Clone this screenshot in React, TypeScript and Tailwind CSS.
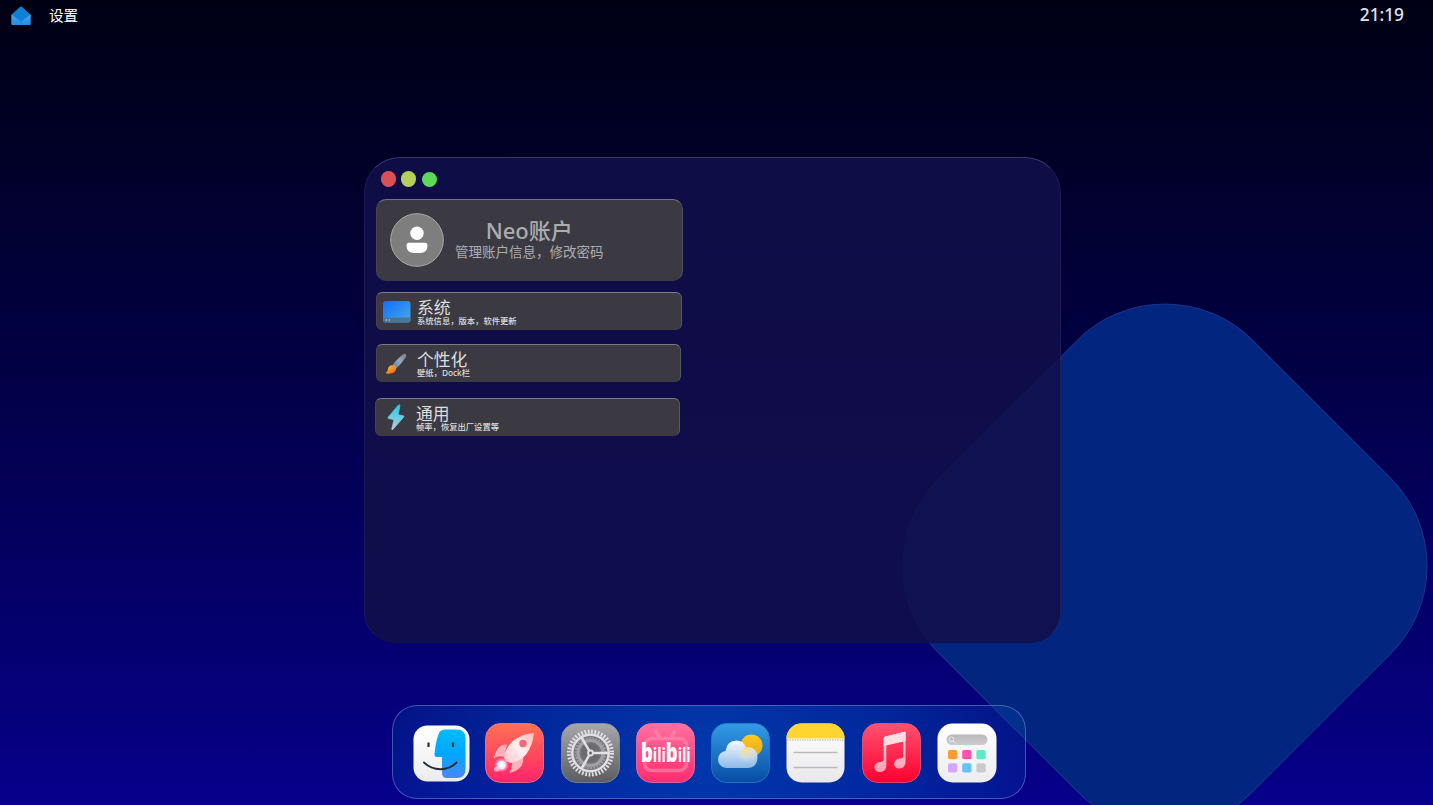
import type { ReactNode } from 'react';

interface SettingItem {
  title: string;
  description: string;
  icon: ReactNode;
  className: string;
}

function MailIcon() {
  return (
    <svg width="22" height="22" viewBox="0 0 22 22">
      <defs>
        <linearGradient id="mailFront" x1="0" y1="0" x2="0" y2="1">
          <stop offset="0" stopColor="#4ba7e8" />
          <stop offset="1" stopColor="#1f8ee2" />
        </linearGradient>
      </defs>
      <path d="M1.300 9.500h19.400V19q0 1-1 1H2.300q-1 0-1-1z" fill="url(#mailFront)" />
      <path d="m2.500 8.800 7.700-7q.8-.7 1.600 0l7.700 7q.7.700 0 1.300L11 17 2.500 10.100q-.7-.6 0-1.300z" fill="#0d80d8" />
    </svg>
  );
}

function ScreenIcon() {
  return (
    <svg width="28" height="22" viewBox="0 0 28 22" className="translate-y-px">
      <defs>
        <linearGradient id="screen" x1="0" y1="0" x2="1" y2="1">
          <stop offset="0" stopColor="#0c70ff" />
          <stop offset="1" stopColor="#4ca9e6" />
        </linearGradient>
      </defs>
      <rect width="27.500" height="21.500" rx="2.500" fill="url(#screen)" />
      <path d="M0 16.500h27.500V19q0 2.500-2.500 2.500H2.500Q0 21.500 0 19z" fill="#4b7595" />
      <path d="M2.500 18.500h1.500v1H2.500zM5.500 18.500H7v1H5.500z" fill="#c5dbe8" />
    </svg>
  );
}

function BrushIcon() {
  return (
    <svg width="22" height="22" viewBox="0 0 22 22" className="-translate-x-px translate-y-px">
      <defs>
        <linearGradient id="handle" x1="1" y1="0" x2="0" y2="1">
          <stop offset="0" stopColor="#77818f" />
          <stop offset=".5" stopColor="#9aa7b6" />
          <stop offset="1" stopColor="#667c99" />
        </linearGradient>
        <linearGradient id="bristle" x1="0" y1="0" x2=".6" y2="1">
          <stop offset="0" stopColor="#ffc13d" />
          <stop offset="1" stopColor="#ef701a" />
        </linearGradient>
      </defs>
      <path d="M20.800 1.200c1 1 .2 2.600-.6 3.900-2.600 3.900-5.700 7.500-8.700 10.200l-4-3.300c2.600-3.500 6.200-7.200 9.800-9.900 1.200-.8 2.600-1.800 3.500-.9z" fill="url(#handle)" />
      <path d="M7.200 12.200c2.500-.2 4.200 1.400 4 3.600-.3 3.700-5.400 5.700-9.700 4.700-.8-.2-.8-.8-.2-1.300 1.500-1 1.300-2 1.700-3.700.5-2 2-3.200 4.200-3.300z" fill="url(#bristle)" />
    </svg>
  );
}

function BoltIcon() {
  return (
    <svg width="18" height="27" viewBox="0 0 18 27">
      <defs>
        <linearGradient id="bolt" x1="0" y1="0" x2="0" y2="1">
          <stop offset="0" stopColor="#20cbee" />
          <stop offset="1" stopColor="#b6cdd4" />
        </linearGradient>
      </defs>
      <path
        d="M11.300 1.200 1.200 13.300q-.7 1 .5 1.300l5.300 1-2.200 9.200q-.1 1.700 1.200.5L16.700 13q.7-1.100-.6-1.300l-5-1 1.800-8.700q.1-2-1.600-.8z"
        fill="url(#bolt)"
        stroke="url(#bolt)"
        strokeWidth=".8"
      />
    </svg>
  );
}

function AccountIcon() {
  return (
    <svg width="54" height="54" viewBox="0 0 54 54">
      <circle cx="27" cy="27" r="26.300" fill="#7e7e7f" stroke="#aaaaac" strokeWidth="1" />
      <circle cx="27" cy="20.200" r="6.700" fill="#fff" />
      <path d="M19 29.700h16q2.500 0 2.500 2.600 0 7.700-7.500 7.700h-6q-7.500 0-7.500-7.700 0-2.600 2.500-2.600z" fill="#fff" />
    </svg>
  );
}

function FinderIcon() {
  return (
    <svg width="57" height="57" viewBox="0 0 57 57">
      <defs>
        <linearGradient id="finderBg" x1="0" y1="0" x2="0" y2="1">
          <stop offset="0" stopColor="#fff" />
          <stop offset="1" stopColor="#ececee" />
        </linearGradient>
        <linearGradient id="finderFace" x1="0" y1="0" x2="0" y2="1">
          <stop offset="0" stopColor="#05bcff" />
          <stop offset=".55" stopColor="#06a5fb" />
          <stop offset="1" stopColor="#4b86f8" />
        </linearGradient>
        <filter id="faceEdge">
          <feGaussianBlur stdDeviation=".4" />
        </filter>
      </defs>
      <rect x=".5" y=".5" width="56" height="56" rx="14" fill="url(#finderBg)" />
      <path
        d="M32 4.500h12q8.500 0 8.500 8.500v31q0 9-8.500 9H34q-5 0-5-5V32h-5q-3 0-2.500-3C22.500 20 23.500 14 26 8q1.500-3.500 6-3.500z"
        fill="url(#finderFace)"
        filter="url(#faceEdge)"
      />
      <path d="M15.500 17.500v4.500M40 17.500v4.500" stroke="#23343f" strokeWidth="2.200" />
      <path d="M11 37.500q7 6.700 16.500 6.700 9.500 0 16-6.700" fill="none" stroke="#252b35" strokeWidth="1.900" strokeLinecap="round" />
    </svg>
  );
}

function RocketIcon() {
  return (
    <svg width="59" height="60" viewBox="0 0 59 60">
      <defs>
        <linearGradient id="rocketBg" x1="0" y1="0" x2="0" y2="1">
          <stop offset="0" stopColor="#ff7056" />
          <stop offset=".5" stopColor="#ff4c5b" />
          <stop offset="1" stopColor="#ff246c" />
        </linearGradient>
        <linearGradient id="rocketBody" x1="1" y1="0" x2="0" y2="1">
          <stop offset="0" stopColor="#ffb9b5" />
          <stop offset=".5" stopColor="#fff0ef" />
          <stop offset="1" stopColor="#ffc1cb" />
        </linearGradient>
        <radialGradient id="flame">
          <stop offset="0" stopColor="#fff" />
          <stop offset=".5" stopColor="#ffc7e6" />
          <stop offset="1" stopColor="#ff91cc" stopOpacity="0" />
        </radialGradient>
      </defs>
      <rect x=".5" y=".5" width="58" height="59" rx="15" fill="url(#rocketBg)" stroke="#ff8988" strokeWidth=".7" />
      <path d="M22 21.500q-6-.5-9.500 4.500-2.500 4-4 9.500 5-3.200 10.500-1.700zM27 38q1 5-2.500 12 7-1.500 11-6 3.500-4 2.500-11z" fill="#ffb1b9" />
      <path d="M49 10q-15 1-24 11-5 6-6 13 .5 5.500 7.500 6Q35 38.500 41 31.500 48 22 49 10z" fill="url(#rocketBody)" />
      <circle cx="38" cy="20.500" r="3.700" fill="#f2687b" />
      <circle cx="16.500" cy="42" r="7.500" fill="url(#flame)" />
      <circle cx="16.500" cy="42" r="4.300" fill="#fff" opacity=".5" />
      <circle cx="11.500" cy="46" r="2.600" fill="#ffd9ec" opacity=".7" />
    </svg>
  );
}

function GearIcon() {
  return (
    <svg width="59" height="60" viewBox="0 0 59 60">
      <defs>
        <linearGradient id="gearBg" x1="0" y1="0" x2="0" y2="1">
          <stop offset="0" stopColor="#a8a8ac" />
          <stop offset="1" stopColor="#5d5d61" />
        </linearGradient>
      </defs>
      <rect x=".5" y=".5" width="58" height="59" rx="15" fill="url(#gearBg)" stroke="#8d95a6" strokeWidth=".7" />
      <circle cx="29.500" cy="30" r="19" fill="#77777b" />
      <circle cx="29.500" cy="30" r="21.500" fill="none" stroke="#e2e2e4" strokeWidth="4" strokeDasharray="1.700 1.678" />
      <circle cx="29.500" cy="30" r="18.200" fill="none" stroke="#e0e0e2" strokeWidth="2.500" />
      <circle cx="29.500" cy="30" r="12.500" fill="none" stroke="#a2a2a6" strokeWidth="3.200" />
      <circle cx="29.500" cy="30" r="15" fill="none" stroke="#a2a2a5" strokeWidth="2" strokeDasharray="1.500 1.640" />
      <circle cx="29.500" cy="30" r="9.500" fill="#6c6c70" />
      <path d="M29.500 30h18M29.500 30l-9-15.600M29.500 30l-9 15.600" stroke="#e3e3e5" strokeWidth="2.500" />
      <circle cx="29.500" cy="30" r="3.400" fill="#dedee0" />
      <circle cx="29.500" cy="30" r="1.500" fill="#65656a" />
    </svg>
  );
}

function BilibiliIcon() {
  return (
    <svg width="59" height="60" viewBox="0 0 59 60" className="overflow-visible">
      <defs>
        <linearGradient id="biliBg" x1="0" y1="0" x2="0" y2="1">
          <stop offset="0" stopColor="#ff70a0" />
          <stop offset="1" stopColor="#ff2c6e" />
        </linearGradient>
      </defs>
      <rect x=".5" y=".5" width="58" height="59" rx="15" fill="url(#biliBg)" stroke="#f47db0" strokeWidth=".7" />
      <g fill="none" stroke="#ff91b4" strokeWidth="3.700" strokeLinecap="round" opacity=".55">
        <rect x="8.500" y="15.500" width="42" height="32" rx="7" />
        <path d="m20 9 4 5.500M38.500 9l-4 5.500" />
      </g>
      <text
        x="7"
        y="39"
        fill="#fff"
        fontSize="20"
        fontWeight="700"
        transform="scale(.71 1)"
        className="font-['Open_Sans','Noto_Sans',sans-serif]"
      >
        <tspan fontSize="26" fontWeight="800">b</tspan>
        ili
        <tspan fontSize="26" fontWeight="800">b</tspan>
        ili
      </text>
    </svg>
  );
}

function WeatherIcon() {
  return (
    <svg width="59" height="60" viewBox="0 0 59 60">
      <defs>
        <linearGradient id="weatherBg" x1="0" y1="0" x2="0" y2="1">
          <stop offset="0" stopColor="#339ce6" />
          <stop offset="1" stopColor="#064ca4" />
        </linearGradient>
        <linearGradient id="sun" x1="0" y1="0" x2="0" y2="1">
          <stop offset="0" stopColor="#ffc721" />
          <stop offset="1" stopColor="#e3ab16" />
        </linearGradient>
        <linearGradient id="cloud" x1="0" y1="0" x2="0" y2="1">
          <stop offset="0" stopColor="#f5faff" />
          <stop offset="1" stopColor="#8cb9e8" />
        </linearGradient>
        <radialGradient id="sunGlow" cx=".4" cy=".15" r=".75">
          <stop offset="0" stopColor="#ffdb75" />
          <stop offset="1" stopColor="#dae9f4" stopOpacity="0" />
        </radialGradient>
      </defs>
      <rect x=".5" y=".5" width="58" height="59" rx="15" fill="url(#weatherBg)" stroke="#307bc4" strokeWidth=".8" />
      <circle cx="40.500" cy="22.500" r="11" fill="url(#sun)" />
      <path d="M16 45q-8.500-.5-9-8.500.5-7.500 7.500-8.500 1.500-10.500 11-10.500 7 0 9.500 7 11-1 11.500 9.500 0 10.500-9.500 11z" fill="url(#cloud)" />
      <circle cx="37" cy="33" r="9" fill="url(#sunGlow)" />
    </svg>
  );
}

function NotesIcon() {
  return (
    <svg width="59" height="60" viewBox="0 0 59 60">
      <defs>
        <linearGradient id="notesBg" x1="0" y1="0" x2="0" y2="1">
          <stop offset="0" stopColor="#fff" />
          <stop offset="1" stopColor="#e8e8ea" />
        </linearGradient>
        <clipPath id="notesClip">
          <rect x=".5" y=".5" width="58" height="59" rx="15" />
        </clipPath>
      </defs>
      <g clipPath="url(#notesClip)">
        <path d="M0 0h59v60H0z" fill="url(#notesBg)" />
        <path d="M0 0h59v15.500H0z" fill="#ffd52f" />
      </g>
      <path d="M1 17h57" stroke="#aaa" strokeWidth="1" strokeDasharray="1.500 1" />
      <path d="M8 29.500h43M8 44.500h43" stroke="#bbbbbd" strokeWidth="1.300" strokeLinecap="round" />
    </svg>
  );
}

function MusicIcon() {
  return (
    <svg width="59" height="60" viewBox="0 0 59 60">
      <defs>
        <linearGradient id="musicBg" x1="0" y1="0" x2="0" y2="1">
          <stop offset="0" stopColor="#ff5272" />
          <stop offset="1" stopColor="#ff002e" />
        </linearGradient>
        <linearGradient id="note" x1="0" y1="0" x2="0" y2="1">
          <stop offset="0" stopColor="#ffe8ec" />
          <stop offset="1" stopColor="#ff9dae" />
        </linearGradient>
      </defs>
      <rect x=".5" y=".5" width="58" height="59" rx="15" fill="url(#musicBg)" stroke="#f5627d" strokeWidth=".7" />
      <path
        d="M43.500 9.300v29.700c0 4-2.500 6.500-6 6.500-3.200 0-5.300-1.800-5.300-4.600 0-3 2.300-5 5.500-5.300 2.500-.2 3.500-.7 3.500-3.200V18.300L24.300 22v20.500c0 4-2.500 6.500-6.300 6.500-3.200 0-5.500-1.800-5.500-4.800 0-2.900 2.300-4.800 5.500-5.200 2.500-.3 3.700-.7 3.700-3.200V15.500q0-1.700 1.700-2l18.400-4.600q1.700-.4 1.700.4z"
        fill="url(#note)"
      />
      <path d="M21.700 15.500q0-1.700 1.700-2l18.400-4.600q1.700-.4 1.700.4V18l-21.800 5z" fill="#ffdce2" />
    </svg>
  );
}

function LaunchpadIcon() {
  const apps = ['#ff9b32', '#ff55b0', '#5bebc4', '#d7a5ff', '#62c4ff', '#cbcbcd'];
  return (
    <svg width="60" height="60" viewBox="0 0 60 60">
      <defs>
        <linearGradient id="launchBg" x1="0" y1="0" x2="0" y2="1">
          <stop offset="0" stopColor="#fff" />
          <stop offset="1" stopColor="#ededef" />
        </linearGradient>
        <linearGradient id="search" x1="0" y1="0" x2="0" y2="1">
          <stop offset="0" stopColor="#b8b8ba" />
          <stop offset="1" stopColor="#cdcdcf" />
        </linearGradient>
        <filter id="soft">
          <feGaussianBlur stdDeviation=".5" />
        </filter>
      </defs>
      <rect x=".5" y=".5" width="59" height="59" rx="15" fill="url(#launchBg)" />
      <rect x="9.500" y="11.500" width="41" height="10.500" rx="5.250" fill="url(#search)" filter="url(#soft)" />
      <circle cx="14.500" cy="16.300" r="2.300" fill="none" stroke="#e7e7e8" />
      <path d="m16.200 18 2 2" stroke="#e7e7e8" />
      <g filter="url(#soft)">
        {apps.map((color, i) => (
          <rect key={color} x={11 + (i % 3) * 14.2} y={27 + Math.floor(i / 3) * 13.3} width="9.300" height="9.300" rx="1.800" fill={color} />
        ))}
      </g>
    </svg>
  );
}

const settings: SettingItem[] = [
  { title: '系统', description: '系统信息，版本，软件更新', icon: <ScreenIcon />, className: 'mt-[11px] w-[306px]' },
  { title: '个性化', description: '壁纸，Dock栏', icon: <BrushIcon />, className: 'mt-[14px] w-[305px]' },
  { title: '通用', description: '帧率，恢复出厂设置等', icon: <BoltIcon />, className: 'mt-4 -ml-px w-[305px]' },
];

function SettingsWindow() {
  return (
    <section className="mt-[125px] ml-[364px] h-[486px] w-[696.500px] rounded-t-[36px] rounded-b-[31px] border border-t-white/17 border-r-white/6 border-b-transparent border-l-white/6 bg-gradient-to-b from-[#110f4a]/87 to-[#120f49]/87 px-[11px] pt-[13px]">
      <div className="flex h-4 items-center pl-[5px]">
        <span className="h-4 w-[15px] rounded-full bg-[#d95057]" />
        <span className="ml-[5px] h-4 w-[15px] rounded-full bg-[#b3d05d]" />
        <span className="ml-1.5 h-[15px] w-[15px] rounded-full bg-[#5ed858]" />
      </div>

      <button className="mt-3 flex h-[82px] w-[307px] items-center rounded-[10px] border border-t-[#73737e] border-r-[#51515e] border-b-[#3b3a45] border-l-[#454451] bg-[#3b3a43] pl-[13px] text-[#adadb0]">
        <AccountIcon />
        <span className="ml-[11px] flex flex-col items-center">
          <span className="text-[22px] leading-6 font-medium">Neo账户</span>
          <span className="mt-px mb-px text-[13.5px] leading-[18px]">管理账户信息，修改密码</span>
        </span>
      </button>

      {settings.map(item => (
        <button
          key={item.title}
          className={`${item.className} flex h-[38px] items-center rounded-md border border-t-[#7c7b88] border-r-[#575664] border-b-[#3b3a45] border-l-[#454451] bg-[#3b3a43] pl-1.5 text-left text-[#dededf]`}
        >
          <span className="flex w-7 shrink-0 justify-center">{item.icon}</span>
          <span className="ml-1.5 flex flex-col">
            <span className="translate-y-px text-[16.800px] leading-[19px]">{item.title}</span>
            <span className="text-[8.300px] leading-[9px] font-medium">{item.description}</span>
          </span>
        </button>
      ))}
    </section>
  );
}

function Dock() {
  return (
    <nav className="mt-[62px] ml-[392px] flex h-[94px] w-[634px] items-center gap-[16.300px] rounded-[25px] border border-[#7c9bdd]/50 bg-[radial-gradient(circle_at_center,rgba(0,66,178,0.85),rgba(0,64,176,0.6)_55%,rgba(0,85,175,0.22)_100%)] pl-5 pt-0.5">
      <span className="-mr-px">
        <FinderIcon />
      </span>
      <RocketIcon />
      <GearIcon />
      <BilibiliIcon />
      <WeatherIcon />
      <NotesIcon />
      <MusicIcon />
      <LaunchpadIcon />
    </nav>
  );
}

export default function App() {
  return (
    <div className="relative isolate flex h-screen flex-col overflow-hidden bg-gradient-to-b from-[#000014] via-[#02004a] to-[#07008b] font-['Noto_Sans','Noto_Sans_CJK_SC',sans-serif]">
      {/* wallpaper shape */}
      <div className="absolute top-[344px] left-[943px] -z-10 h-[444px] w-[444px] rotate-45 rounded-[124px] border border-[#1c3288] bg-[#022580]" />

      <header className="flex h-8 items-center pr-[29px] pl-2.5 text-white">
        <MailIcon />
        <span className="ml-[17px] text-[14.600px]">设置</span>
        <time className="-mt-[3px] ml-auto text-[17.300px] font-medium text-[#e2e2e6]">21:19</time>
      </header>
      <SettingsWindow />
      <Dock />
    </div>
  );
}
